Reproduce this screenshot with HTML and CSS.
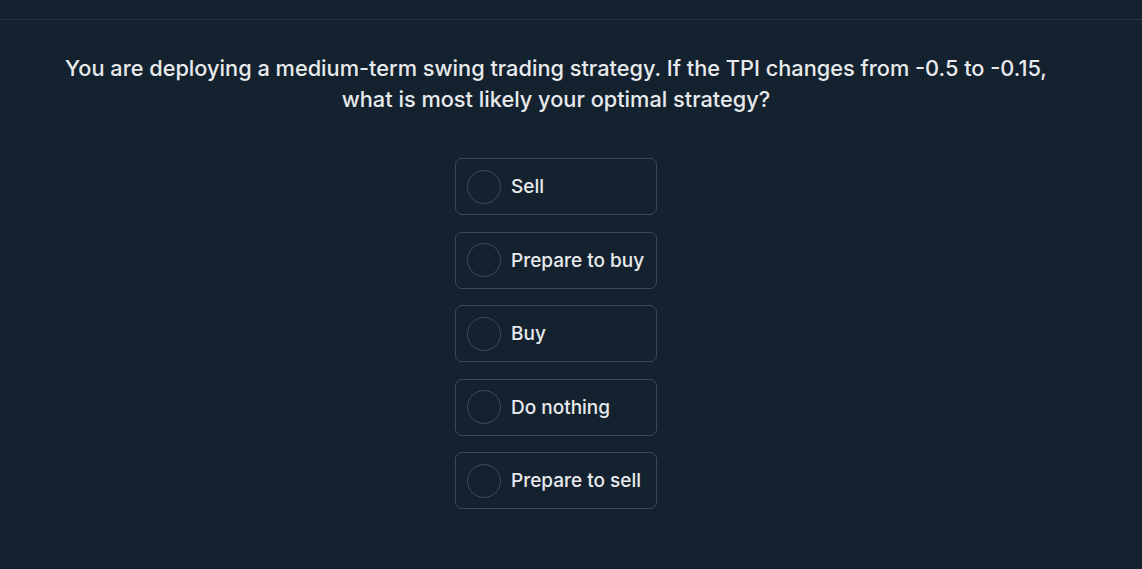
FILE: index.html
```html
<!DOCTYPE html>
<html>
<head>
<meta charset="utf-8">
<link rel="stylesheet" href="styles.css">
</head>
<body>
<div class="topbar"></div>
<main class="quiz">
  <h1 class="question">You are deploying a medium-term swing trading strategy. If the TPI changes from -0.5 to -0.15, what is most likely your optimal strategy?</h1>
  <div class="options">
    <label class="option"><span class="radio"></span><span class="label">Sell</span></label>
    <label class="option"><span class="radio"></span><span class="label">Prepare to buy</span></label>
    <label class="option"><span class="radio"></span><span class="label">Buy</span></label>
    <label class="option"><span class="radio"></span><span class="label">Do nothing</span></label>
    <label class="option"><span class="radio"></span><span class="label">Prepare to sell</span></label>
  </div>
</main>
</body>
</html>
```
FILE: styles.css
```css
html, body {
  margin: 0;
  padding: 0;
  background: #142230;
  height: 100%;
}
body {
  font-family: Inter, "Noto Sans", sans-serif;
  color: #e8eaec;
}
.topbar {
  height: 19px;
  border-bottom: 1px solid #253543;
}
.quiz {
  padding-right: 30px;
  display: flex;
  flex-direction: column;
  align-items: center;
}
.question {
  margin: 33px 0 0;
  width: 1000px;
  font-size: 21.75px;
  font-weight: 500;
  line-height: 31px;
  text-align: center;
}
.options {
  margin-top: 43px;
  display: flex;
  flex-direction: column;
  gap: 16.5px;
}
.option {
  box-sizing: border-box;
  width: 202px;
  height: 57px;
  border: 1px solid #3a4956;
  border-radius: 7px;
  display: flex;
  align-items: center;
  padding-left: 11px;
  gap: 10px;
}
.radio {
  box-sizing: border-box;
  width: 34px;
  height: 34px;
  border-radius: 50%;
  border: 1.5px solid #3d4c59;
  flex: none;
}
.label {
  font-size: 19px;
  font-weight: 500;
}
```
